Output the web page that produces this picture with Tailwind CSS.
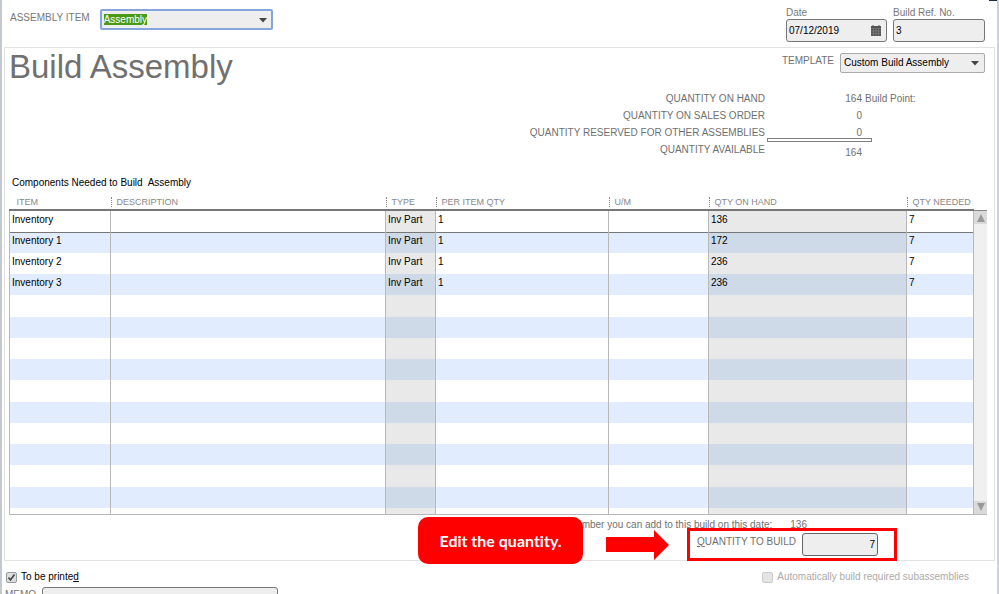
<!DOCTYPE html>
<html lang="en">
<head>
    <meta charset="UTF-8">
    <meta name="viewport" content="width=device-width, initial-scale=1.0">
    <title>Build Assembly</title>
    <script src="https://cdn.jsdelivr.net/npm/@tailwindcss/browser@4"></script>
</head>
<body class="h-screen overflow-hidden bg-white font-['Liberation_Sans',Arial,sans-serif] text-[10px] leading-3 text-black">
<div class="relative min-h-full border-l-2 border-r-2 border-l-[#c3c8ce] border-r-[#cfd1da] pl-0.5">
    <div class="absolute top-0 right-0 h-px w-2 bg-[#1b2a4a]"></div>

    <!-- Top bar -->
    <header class="flex h-[47px] justify-between pl-1.5 pr-3">
        <div class="flex items-start gap-2.5 pt-[9px]">
            <label for="assembly-item" class="pt-[3px] text-[#777]">ASSEMBLY ITEM</label>
            <div class="flex h-[21px] w-[173px] items-center rounded-xs border-2 border-[#86a5dc] bg-[#eee] pr-1">
                <input id="assembly-item" type="text" value="Assembly" class="h-3.5 min-w-0 grow pl-0.5 text-[10px] outline-none selection:bg-[#4a9a16] selection:text-white">
                <button type="button" aria-label="Show items">
                    <svg class="h-1.5 w-2" viewBox="0 0 8 6"><path d="M0 1h8L4 5.500z" fill="#444"/></svg>
                </button>
            </div>
        </div>
        <div class="flex gap-1.5 pt-[7px] text-[#777]">
            <div class="w-[101px]">
                <label for="date">Date</label>
                <div class="flex h-[23px] items-center rounded-[3px] border border-[#777] bg-[#eee] pr-1">
                    <input id="date" type="text" value="07/12/2019" class="min-w-0 grow pl-0.5 text-black outline-none">
                    <button type="button" aria-label="Open calendar">
                        <svg class="h-3 w-3" viewBox="0 0 12 12"><path d="M1 1h10v10H1z" fill="#555"/><path d="M1 3.500h10M1 6h10M1 8.500h10M3.500 3v8M6 3v8M8.500 3v8" stroke="#888" stroke-width=".5"/><path d="M3 0v2M9 0v2" stroke="#555"/></svg>
                    </button>
                </div>
            </div>
            <div class="w-[92px]">
                <label for="ref-no">Build Ref. No.</label>
                <input id="ref-no" type="text" value="3" class="block h-[23px] w-full rounded-[3px] border border-[#777] bg-[#eee] pl-0.5 text-black">
            </div>
        </div>
    </header>

    <!-- Form panel -->
    <main class="mr-0.5 h-[514px] border border-[#e2e2e2] pl-1 pr-[7px]">
        <div class="flex h-[129px] justify-between">
            <h1 class="text-[33px] leading-[38px] text-[#707070]">Build Assembly</h1>
            <div class="flex flex-col items-end pt-[5px] pr-0.5 text-[#707070]">
                <div class="flex gap-1.5">
                    <label for="template" class="pt-0.5">TEMPLATE</label>
                    <div class="relative w-[145px]">
                        <select id="template" class="h-5 w-full appearance-none rounded-xs border border-[#aaa] bg-[#eee] pl-[3px] text-[10px] text-black">
                            <option>Custom Build Assembly</option>
                        </select>
                        <svg class="pointer-events-none absolute top-[7px] right-1.5 h-1.5 w-2" viewBox="0 0 8 6"><path d="M0 1h8L4 5.500z" fill="#444"/></svg>
                    </div>
                </div>
                <dl class="mt-5 mr-[123px] grid grid-cols-[auto_97px] gap-y-[5px] text-right">
                    <dt>QUANTITY ON HAND</dt>
                    <dd class="relative">164<span class="absolute left-full pl-[3px] whitespace-nowrap">Build Point:</span></dd>
                    <dt>QUANTITY ON SALES ORDER</dt>
                    <dd>0</dd>
                    <dt>QUANTITY RESERVED FOR OTHER ASSEMBLIES</dt>
                    <dd>0</dd>
                    <dt>QUANTITY AVAILABLE</dt>
                    <dd class="relative pt-[3px]"><span class="absolute -top-1.5 -right-2.5 h-1 w-[105px] border border-[#808080]"></span>164</dd>
                </dl>
            </div>
        </div>

        <p class="pl-[3px] whitespace-pre">Components Needed to Build  Assembly</p>

        <div class="mt-[5px] flex">
            <table class="w-full table-fixed border-collapse">
                <colgroup>
                    <col class="w-[101px]"><col><col class="w-[50px]"><col class="w-[173px]"><col class="w-[100px]"><col class="w-[198px]"><col class="w-[67px]">
                </colgroup>
                <thead>
                    <tr class="h-4 text-left text-[9px] whitespace-nowrap text-[#888]">
                        <th class="pl-[7px] font-normal">ITEM</th>
                        <th class="font-normal"><span class="mr-[5px] border-l border-dotted border-[#888]"></span>DESCRIPTION</th>
                        <th class="font-normal"><span class="mr-[5px] border-l border-dotted border-[#888]"></span>TYPE</th>
                        <th class="font-normal"><span class="mr-[5px] border-l border-dotted border-[#888]"></span>PER ITEM QTY</th>
                        <th class="font-normal"><span class="mr-[5px] border-l border-dotted border-[#888]"></span>U/M</th>
                        <th class="font-normal"><span class="mr-[5px] border-l border-dotted border-[#888]"></span>QTY ON HAND</th>
                        <th class="font-normal"><span class="mr-[5px] border-l border-dotted border-[#888]"></span>QTY NEEDED</th>
                    </tr>
                </thead>
                <tbody id="rows" class="border border-t-2 border-[#b8b8b8] border-t-[#888]"></tbody>
            </table>
            <div class="mt-4 flex w-[13px] shrink-0 flex-col justify-between border-t border-b border-t-[#888] border-b-[#bbb] bg-[#f0f0f0]">
                <button type="button" aria-label="Scroll up" class="flex h-[13px] items-center justify-center bg-[#dadada]"><svg class="h-2 w-2" viewBox="0 0 8 8"><path d="M0 8h8L4 0z" fill="#999"/></svg></button>
                <button type="button" aria-label="Scroll down" class="flex h-[13px] items-center justify-center bg-[#dadada]"><svg class="h-2 w-2" viewBox="0 0 8 8"><path d="M0 0h8L4 8z" fill="#999"/></svg></button>
            </div>
        </div>

        <p class="mt-1 mr-[180px] flex h-3 justify-end gap-[18px] text-[#707070]">
            <span>Maximum number you can add to this build on this date:</span><span>136</span>
        </p>

        <!-- Callout, arrow and quantity field -->
        <div class="relative -mt-3.5 mr-[90px] flex items-start justify-end">
            <div class="h-[47px] w-[165px] rounded-[10px] bg-[#f00] text-center font-[Lato,sans-serif] text-[16px] leading-[47px] font-bold text-white [font-variant-ligatures:none]">Edit the quantity.</div>
            <svg class="mt-3 ml-[23px] h-8 w-[63px]" viewBox="0 0 63 32"><path d="M0 8h48V1l15 15-15 15v-8H0z" fill="#f00"/></svg>
            <div class="mt-[11px] ml-[18px] flex h-[33px] w-[210px] items-start border-[3px] border-[#f00] pt-0.5 pl-[7px] text-[#707070]">
                <label for="build-qty" class="w-[105px] pt-[3px]"><u>Q</u>UANTITY TO BUILD</label>
                <input id="build-qty" type="text" value="7" class="h-[23px] w-[76px] rounded-[3px] border border-[#666] bg-[#eee] pr-0.5 text-right text-black">
            </div>
        </div>
    </main>

    <!-- Options -->
    <div class="flex h-6 items-center justify-between pt-2 pr-7 pl-0.5">
        <label class="flex items-center gap-1">
            <span class="relative flex">
                <input type="checkbox" checked class="peer h-[11px] w-[11px] appearance-none rounded-[2px] border border-[#999] bg-[#ddd]">
                <svg class="pointer-events-none absolute h-[11px] w-[11px] opacity-0 peer-checked:opacity-100" viewBox="0 0 11 11"><path d="M2.500 5.500l2 2.500 4-5.500" fill="none" stroke="#444" stroke-width="1.600"/></svg>
            </span>
            <span>To be printe<u>d</u></span>
        </label>
        <label class="flex items-center gap-1 text-[#aaa]">
            <input type="checkbox" disabled class="h-[11px] w-[11px] appearance-none rounded-[2px] border border-[#ccc] bg-[#e4e4e4]">
            Automatically build required subassemblies
        </label>
    </div>
    <div class="flex gap-1.5 pt-0.5 pl-px">
        <label for="memo" class="pt-0.5 text-[#777]">MEMO</label>
        <input id="memo" type="text" class="h-[21px] w-[236px] rounded-[3px] border border-[#777] bg-[#eee]">
    </div>
</div>

<script>
    const items = [
        ['Inventory', '', 'Inv Part', '1', '', '136', '7'],
        ['Inventory 1', '', 'Inv Part', '1', '', '172', '7'],
        ['Inventory 2', '', 'Inv Part', '1', '', '236', '7'],
        ['Inventory 3', '', 'Inv Part', '1', '', '236', '7'],
    ];
    const body = document.getElementById('rows');

    for (let i = 0; i < 15; i++) {
        const row = body.insertRow();
        row.className = i === 14 ? 'h-[6px]' : i % 4 === 0 ? 'h-[22px]' : 'h-[21px]';
        if (i === 0) row.className += ' border border-t-2 border-[#777]';
        if (i % 2) row.className += ' bg-[#e1edfe]';
        for (let c = 0; c < 7; c++) {
            const cell = row.insertCell();
            cell.className = 'border-x border-[#b8b8b8] p-0 pb-[3px] pl-0.5 align-middle';
            // read-only columns are shaded
            if (c === 2 || c === 5) cell.className += i % 2 ? ' bg-[#cedae8]' : ' bg-[#e9e9e9]';
            cell.textContent = items[i] ? items[i][c] : '';
        }
    }

    // start with the item name selected
    const item = document.getElementById('assembly-item');
    item.focus();
    item.select();
</script>
</body>
</html>
